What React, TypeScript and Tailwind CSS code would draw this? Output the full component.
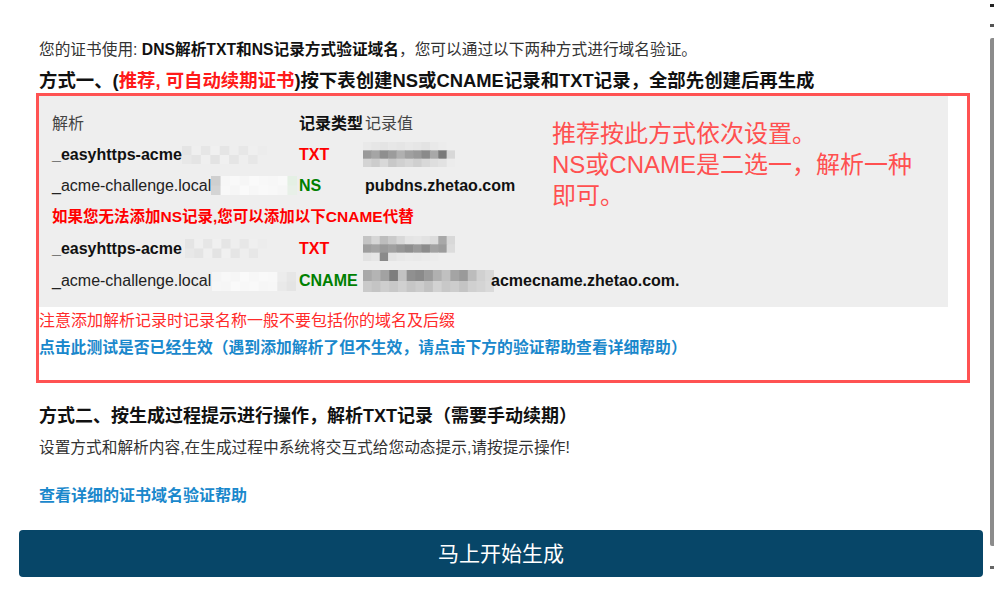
import React from "react";

type MosaicProps = { w: number; h: number; rows: string[][]; className?: string };

function Mosaic({ w, h, rows, className }: MosaicProps) {
  const ch = h / rows.length;
  return (
    <svg width={w} height={h} className={className} viewBox={`0 0 ${w} ${h}`}>
      <defs>
        <filter id="soft" x="-5%" y="-5%" width="110%" height="110%">
          <feGaussianBlur stdDeviation="0.7" />
        </filter>
      </defs>
      <g filter="url(#soft)">
        {rows.map((r, i) => {
          const cw = w / r.length;
          return r.map((c, j) => (
            <rect key={`${i}-${j}`} x={j * cw} y={i * ch} width={cw + 0.6} height={ch + 0.6} fill={c} />
          ));
        })}
      </g>
    </svg>
  );
}

const nameLight1 = [
  ["#e4e4e4", "#efefef", "#e6e6e6", "#f0f0f0", "#e5e5e5", "#eeeeee", "#e7e7e7", "#efefef", "#ececec"],
  ["#e8e8e8", "#e4e4e4", "#efefef", "#e3e3e3", "#f0f0f0", "#e5e5e5", "#eeeeee", "#e7e7e7", "#eeeeee"],
];
const nameWhite2 = [
  ["#cfcfcf", "#f7f7f7", "#f9f9f9", "#f6f6f6", "#fafafa", "#f8f8f8", "#f7f7f7", "#f9f9f9", "#e4f0e4"],
  ["#d4d4d4", "#f8f8f8", "#f6f6f6", "#fafafa", "#f7f7f7", "#f9f9f9", "#f8f8f8", "#f6f6f6", "#e8f0e8"],
];
const nameWhite4 = [
  ["#f5f5f5", "#f8f8f8", "#f6f6f6", "#fafafa", "#f7f7f7", "#f9f9f9", "#f8f8f8", "#ececec", "#e6e6e6"],
  ["#f7f7f7", "#f6f6f6", "#fafafa", "#f8f8f8", "#f9f9f9", "#f6f6f6", "#f7f7f7", "#e9e9e9", "#e4e4e4"],
];
const val1 = [
  ["#e9e9e9", "#e6e6e6", "#e4e4e4", "#e7e7e7", "#e5e5e5", "#e8e8e8", "#e6e6e6", "#e3e3e3", "#e9e9e9", "#ececec", "#eeeeee"],
  ["#9a9a9a", "#a5a5a5", "#8f8f8f", "#9c9c9c", "#b0b0b0", "#a0a0a0", "#999999", "#8a8a8a", "#a8a8a8", "#7a7a7a", "#d8d8d8"],
  ["#d4d4d4", "#cccccc", "#d8d8d8", "#c8c8c8", "#d0d0d0", "#d6d6d6", "#cfcfcf", "#d8d8d8", "#dedede", "#e2e2e2", "#ececec"],
];
const val3 = [
  ["#c4c4c4", "#d6d6d6", "#bdbdbd", "#cacaca", "#d8d8d8", "#e4e4e4", "#e6e6e6", "#e2e2e2", "#dcdcdc", "#a8a8a8", "#d8d8d8"],
  ["#9e9e9e", "#a4a4a4", "#9a9a9a", "#a0a0a0", "#969696", "#8e8e8e", "#9a9a9a", "#8c8c8c", "#a2a2a2", "#9c9c9c", "#dcdcdc"],
  ["#e2e2e2", "#e6e6e6", "#8a8a8a", "#e4e4e4", "#e8e8e8", "#eaeaea", "#e9e9e9", "#ebebeb", "#ececec", "#eeeeee", "#eeeeee"],
];
const val4 = [
  ["#a9a9a9", "#b4b4b4", "#a2a2a2", "#7e7e7e", "#c2c2c2", "#909090", "#8a8a8a", "#9a9a9a", "#b0b0b0", "#c0c0c0", "#a4a4a4", "#9a9a9a", "#bcbcbc", "#d0d0d0", "#d8d8d8"],
  ["#cacaca", "#c4c4c4", "#cecece", "#c8c8c8", "#d0d0d0", "#c6c6c6", "#cccccc", "#c2c2c2", "#d2d2d2", "#c8c8c8", "#cdcdcd", "#c4c4c4", "#d0d0d0", "#d4d4d4", "#dadada"],
];

export default function App() {
  return (
    <div className="flex min-h-[595px] w-[994px] bg-white font-['Liberation_Sans','Noto_Sans_CJK_SC',sans-serif] text-[#333]">
      <div className="flex w-[990px] flex-col">
        <div className="flex flex-col pl-[39px] pt-[38px]">
          <p className="h-[24px] whitespace-nowrap text-[15.7px] leading-[24px] text-[#333]">
            您的证书使用: <b className="font-bold text-[#111]">DNS解析TXT和NS记录方式验证域名</b>，您可以通过以下两种方式进行域名验证。
          </p>
          <h2 className="mt-[7px] h-[24px] whitespace-nowrap text-[18.4px] font-bold leading-[24px] text-[#111]">
            方式一、(<span className="text-[#ff1a1a]">推荐, 可自动续期证书</span>)按下表创建NS或CNAME记录和TXT记录，全部先创建后再生成
          </h2>

          <div className="relative -ml-[3px] flex h-[290px] w-[934px] flex-col border-[3px] border-[#ff5252]">
            <div className="flex w-[909px] flex-col bg-[#eeeeee] pb-[10px] pl-[13px] pt-[12px] text-[16px]">
              <div className="flex h-[31px] items-center">
                <div className="w-[247px] text-[#444]">解析</div>
                <div className="w-[66px] font-bold text-[#111]">记录类型</div>
                <div className="text-[#444]">记录值</div>
              </div>
              <div className="flex h-[31px] items-center">
                <div className="flex w-[247px] items-center font-bold text-[#111]">
                  _easyhttps-acme
                  <Mosaic w={85} h={18} rows={nameLight1} className="ml-[0px]" />
                </div>
                <div className="w-[66px] font-bold text-[#ff0000]">TXT</div>
                <Mosaic w={92} h={25} rows={val1} className="-ml-[2px]" />
              </div>
              <div className="flex h-[31px] items-center">
                <div className="flex w-[247px] items-center text-[#222]">
                  _acme-challenge.local
                  <Mosaic w={86} h={19} rows={nameWhite2} className="ml-[0px]" />
                </div>
                <div className="w-[66px] font-bold text-[#008000]">NS</div>
                <div className="font-bold text-[#111]">pubdns.zhetao.com</div>
              </div>
              <div className="flex h-[31px] items-center text-[15.5px] font-bold text-[#ff0000]">
                如果您无法添加NS记录,您可以添加以下CNAME代替
              </div>
              <div className="flex h-[33px] items-center">
                <div className="flex w-[247px] items-center font-bold text-[#111]">
                  _easyhttps-acme
                  <Mosaic w={82} h={19} rows={nameLight1} className="ml-[3px]" />
                </div>
                <div className="w-[66px] font-bold text-[#ff0000]">TXT</div>
                <Mosaic w={92} h={25} rows={val3} className="-ml-[2px]" />
              </div>
              <div className="flex h-[32px] items-center">
                <div className="flex w-[247px] items-center text-[#222]">
                  _acme-challenge.local
                  <Mosaic w={84} h={19} rows={nameWhite4} className="ml-[1px]" />
                </div>
                <div className="w-[66px] font-bold text-[#008000]">CNAME</div>
                <Mosaic w={131} h={22} rows={val4} className="-ml-[2px]" />
                <div className="-ml-[3px] font-bold text-[#111]">acmecname.zhetao.com.</div>
              </div>
            </div>
            <p className="mt-[2px] h-[24px] whitespace-nowrap text-[16px] leading-[24px] text-[#ff2b2b]">
              注意添加解析记录时记录名称一般不要包括你的域名及后缀
            </p>
            <p className="mt-[3px] h-[24px] whitespace-nowrap text-[15.8px] font-bold leading-[24px] text-[#1a88cc]">
              点击此测试是否已经生效（遇到添加解析了但不生效，请点击下方的验证帮助查看详细帮助）
            </p>

            <div className="absolute left-[513px] top-[22px] whitespace-nowrap text-[24px] leading-[31px] text-[#ff5050]">
              推荐按此方式依次设置。
              <br />
              NS或CNAME是二选一，解析一种
              <br />
              即可。
            </div>
          </div>

          <h2 className="mt-[20px] h-[26px] whitespace-nowrap text-[18px] font-bold leading-[26px] text-[#111]">
            方式二、按生成过程提示进行操作，解析TXT记录（需要手动续期）
          </h2>
          <p className="mt-[7px] h-[24px] whitespace-nowrap text-[15.7px] leading-[24px] text-[#333]">
            设置方式和解析内容,在生成过程中系统将交互式给您动态提示,请按提示操作!
          </p>
          <p className="mt-[24px] h-[24px] text-[16px] font-bold leading-[24px] text-[#1a88cc]">
            查看详细的证书域名验证帮助
          </p>
        </div>
        <button className="ml-[19px] mt-[22px] flex h-[47px] w-[964px] items-center justify-center rounded-[4px] bg-[#074668] text-[21px] text-white">
          马上开始生成
        </button>
      </div>
      <div className="flex w-[4px] flex-col items-center">
        <div className="mt-[4px] h-[3px] w-[4px] bg-[#222]" />
        <div className="mt-[17px] h-[3px] w-[4px] bg-[#555]" />
        <div className="mt-[11px] h-[508px] w-[4px] rounded-l-[2px] bg-[#8c8c8c]" />
        <div className="mt-[20px] h-[3px] w-[4px] bg-[#666]" />
      </div>
    </div>
  );
}
